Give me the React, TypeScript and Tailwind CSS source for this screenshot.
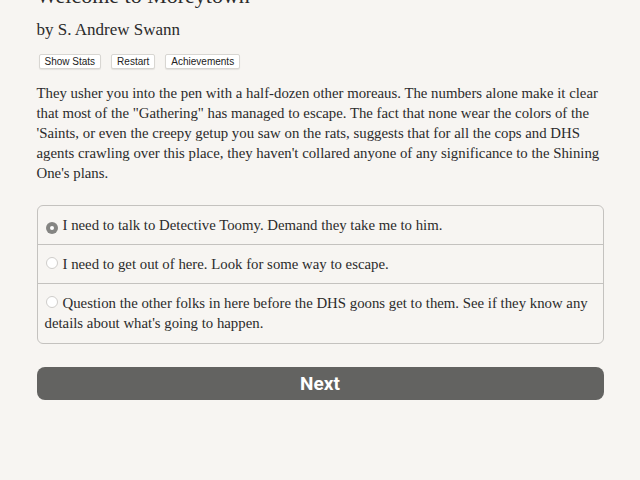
import { useState } from 'react';

const OPTIONS = [
  "I need to talk to Detective Toomy. Demand they take me to him.",
  "I need to get out of here. Look for some way to escape.",
  "Question the other folks in here before the DHS goons get to them. See if they know any details about what's going to happen.",
];

const serif = "font-['Palatino_Linotype','Book_Antiqua','Liberation_Serif',serif]";
const menuBtn = "h-[15px] px-[5px] leading-[14px] bg-white rounded-[2px] border border-[#d8d6d2] shadow-[0_1px_1px_rgba(0,0,0,0.08)]";

export default function App() {
  const [choice, setChoice] = useState(0);

  return (
    <div className={`h-screen w-full overflow-hidden bg-[#f7f5f2] text-[#2b2b2b] ${serif}`}>
      <div className="mx-auto w-[567px] -mt-[17px]">
        <h1 className="text-[22px] leading-[26px] text-[#2b2b2b]">Welcome to Moreytown</h1>
        <p className="mt-[10px] text-[17px] leading-[22px]">by S. Andrew Swann</p>

        {/* Top menu buttons */}
        <div className="mt-[13px] flex gap-[10px] pl-[2px] font-['Liberation_Sans',Arial,sans-serif] text-[10px] text-[#222]">
          <button className={menuBtn}>Show Stats</button>
          <button className={menuBtn}>Restart</button>
          <button className={menuBtn}>Achievements</button>
        </div>

        <p className="mt-[14px] text-[14.8px] leading-[20px]">
          They usher you into the pen with a half-dozen other moreaus. The numbers alone make it clear that most of the "Gathering" has managed to escape. The fact that none wear the colors of the 'Saints, or even the creepy getup you saw on the rats, suggests that for all the cops and DHS agents crawling over this place, they haven't collared anyone of any significance to the Shining One's plans.
        </p>

        {/* Choice list */}
        <div className="mt-[22px] rounded-[6px] border border-[#c4c2bf] overflow-hidden">
          {OPTIONS.map((opt, i) => (
            <label
              key={i}
              onClick={() => setChoice(i)}
              className={`block px-[7px] pt-[9px] text-[14.8px] leading-[20px] cursor-pointer ${i === OPTIONS.length - 1 ? 'pb-[10px]' : 'pb-[9px]'} ${i > 0 ? 'border-t border-[#c4c2bf]' : ''}`}
            >
              <span
                className={`inline-flex items-center justify-center align-[0px] mr-[5px] ml-[1px] w-[12px] h-[12px] rounded-full ${
                  choice === i ? 'bg-[#858583]' : 'bg-white border border-[#cfcdca]'
                }`}
              >
                {choice === i && <span className="w-[4px] h-[4px] rounded-full bg-white" />}
              </span>
              {opt}
            </label>
          ))}
        </div>

        <button className="mt-[23px] w-full h-[33px] rounded-[8px] bg-[#636361] text-white font-['Roboto','Liberation_Sans',sans-serif] font-bold text-[19px] leading-[33px]">
          Next
        </button>
      </div>
    </div>
  );
}
